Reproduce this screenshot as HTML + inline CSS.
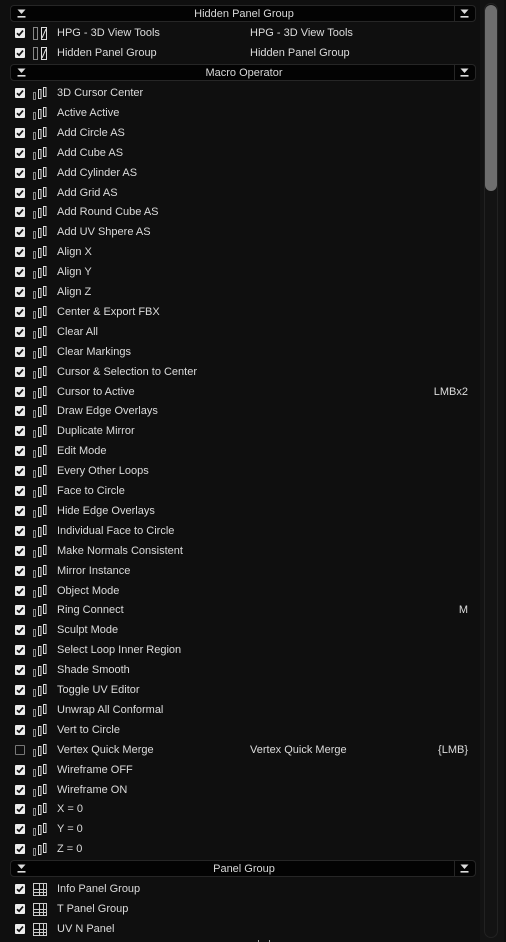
<!DOCTYPE html><html><head><style>
body{margin:0;width:506px;height:942px;background:#0f0f0f;overflow:hidden;font-family:"Liberation Sans","DejaVu Sans",sans-serif;font-size:11px;color:#dcdcdc;position:relative}
.h{position:absolute;left:10px;width:466px;height:17px;background:#030303;border:1px solid #262626;border-radius:4px;box-sizing:border-box}
.h .t{position:absolute;left:0;width:466px;text-align:center;top:2px;color:#d8d8d8}
.h .sep{position:absolute;left:443px;top:0;width:1px;height:15px;background:#262626}
.ar{position:absolute;top:3px;width:9px;height:9px}
.r{position:absolute;left:0;width:480px;height:18px}
.cb{position:absolute;left:15px;top:4px;width:10px;height:10px;background:#ececec;border-radius:1px}
.cb svg{position:absolute;left:1px;top:1px}
.cb.off{background:transparent;border:1px solid #777;box-sizing:border-box}
.ic{position:absolute;left:33px;top:3px}
.n{position:absolute;left:57px;top:3px}
.c2{position:absolute;left:250px;top:3px}
.c3{position:absolute;right:12px;top:3px}
</style></head><body>
<div style="position:absolute;left:480px;top:0;width:24px;height:942px;background:#131313"></div>
<div style="position:absolute;left:484px;top:3px;width:14px;height:935px;border:1px solid #222;border-radius:7px;box-sizing:border-box"></div>
<div style="position:absolute;left:485px;top:5px;width:12px;height:186px;background:#6e6e6e;border-radius:6px"></div>
<div id="c"></div>
<script>
const chk='<svg width="8" height="8" viewBox="0 0 8 8"><path d="M1 4.2 L3.1 6.2 L7 1.6" stroke="#111" stroke-width="1.7" fill="none"/></svg>';
const arrow=x=>`<svg class="ar" style="left:${x}px" viewBox="0 0 9 9"><path d="M0.5 0.5h8L4.5 5z" fill="#ddd"/><rect x="0.5" y="7" width="8" height="1.6" fill="#ddd"/></svg>`;
const icA='<svg class="ic" width="16" height="13" viewBox="0 0 16 13"><rect x="0.5" y="0.5" width="4" height="12" fill="none" stroke="#888"/><rect x="8.5" y="0.5" width="5" height="12" fill="none" stroke="#ddd"/><path d="M9 11L13 2" stroke="#ddd"/></svg>';
const icB='<svg class="ic" width="16" height="13" viewBox="0 0 16 13"><rect x="0.5" y="5.5" width="2" height="7" fill="none" stroke="#888"/><rect x="5.5" y="2.5" width="2.5" height="9" fill="none" stroke="#ddd"/><rect x="10.5" y="0.5" width="2.5" height="9" fill="none" stroke="#ddd"/></svg>';
const icC='<svg class="ic" width="16" height="13" viewBox="0 0 16 13"><rect x="0.5" y="0.5" width="13" height="12" fill="none" stroke="#ccc"/><path d="M0 6.5H14M0 9.5H14M6.5 0V13M10.5 0V13" stroke="#ccc"/></svg>';
let h='';
function hd(y,t){h+=`<div class="h" style="top:${y}px"><div class="t">${t}</div>${arrow(6)}<div class="sep"></div>${arrow(449)}</div>`}
function row(y,ic,n,c2='',c3='',off=false){h+=`<div class="r" style="top:${y-9}px"><div class="cb${off?' off':''}">${off?'':chk}</div>${ic}<div class="n">${n}</div><div class="c2">${c2}</div><div class="c3">${c3}</div></div>`}
hd(5,'Hidden Panel Group');
row(33,icA,'HPG - 3D View Tools','HPG - 3D View Tools');
row(53,icA,'Hidden Panel Group','Hidden Panel Group');
hd(64,'Macro Operator');
const items=[['3D Cursor Center'],['Active Active'],['Add Circle AS'],['Add Cube AS'],['Add Cylinder AS'],['Add Grid AS'],['Add Round Cube AS'],['Add UV Shpere AS'],['Align X'],['Align Y'],['Align Z'],['Center &amp; Export FBX'],['Clear All'],['Clear Markings'],['Cursor &amp; Selection to Center'],['Cursor to Active','','LMBx2'],['Draw Edge Overlays'],['Duplicate Mirror'],['Edit Mode'],['Every Other Loops'],['Face to Circle'],['Hide Edge Overlays'],['Individual Face to Circle'],['Make Normals Consistent'],['Mirror Instance'],['Object Mode'],['Ring Connect','','M'],['Sculpt Mode'],['Select Loop Inner Region'],['Shade Smooth'],['Toggle UV Editor'],['Unwrap All Conformal'],['Vert to Circle'],['Vertex Quick Merge','Vertex Quick Merge','{LMB}',1],['Wireframe OFF'],['Wireframe ON'],['X = 0'],['Y = 0'],['Z = 0']];
items.forEach((it,i)=>row(Math.round(93+i*19.9),icB,it[0],it[1]||'',it[2]||'',!!it[3]));
hd(860,'Panel Group');
row(889,icC,'Info Panel Group');row(909,icC,'T Panel Group');row(929,icC,'UV N Panel');
document.getElementById('c').innerHTML=h;
</script>
<div style="position:absolute;left:258px;top:940px;width:10px;height:2px;border-left:1px solid #aaa;border-right:1px solid #aaa"></div>
</body></html>
